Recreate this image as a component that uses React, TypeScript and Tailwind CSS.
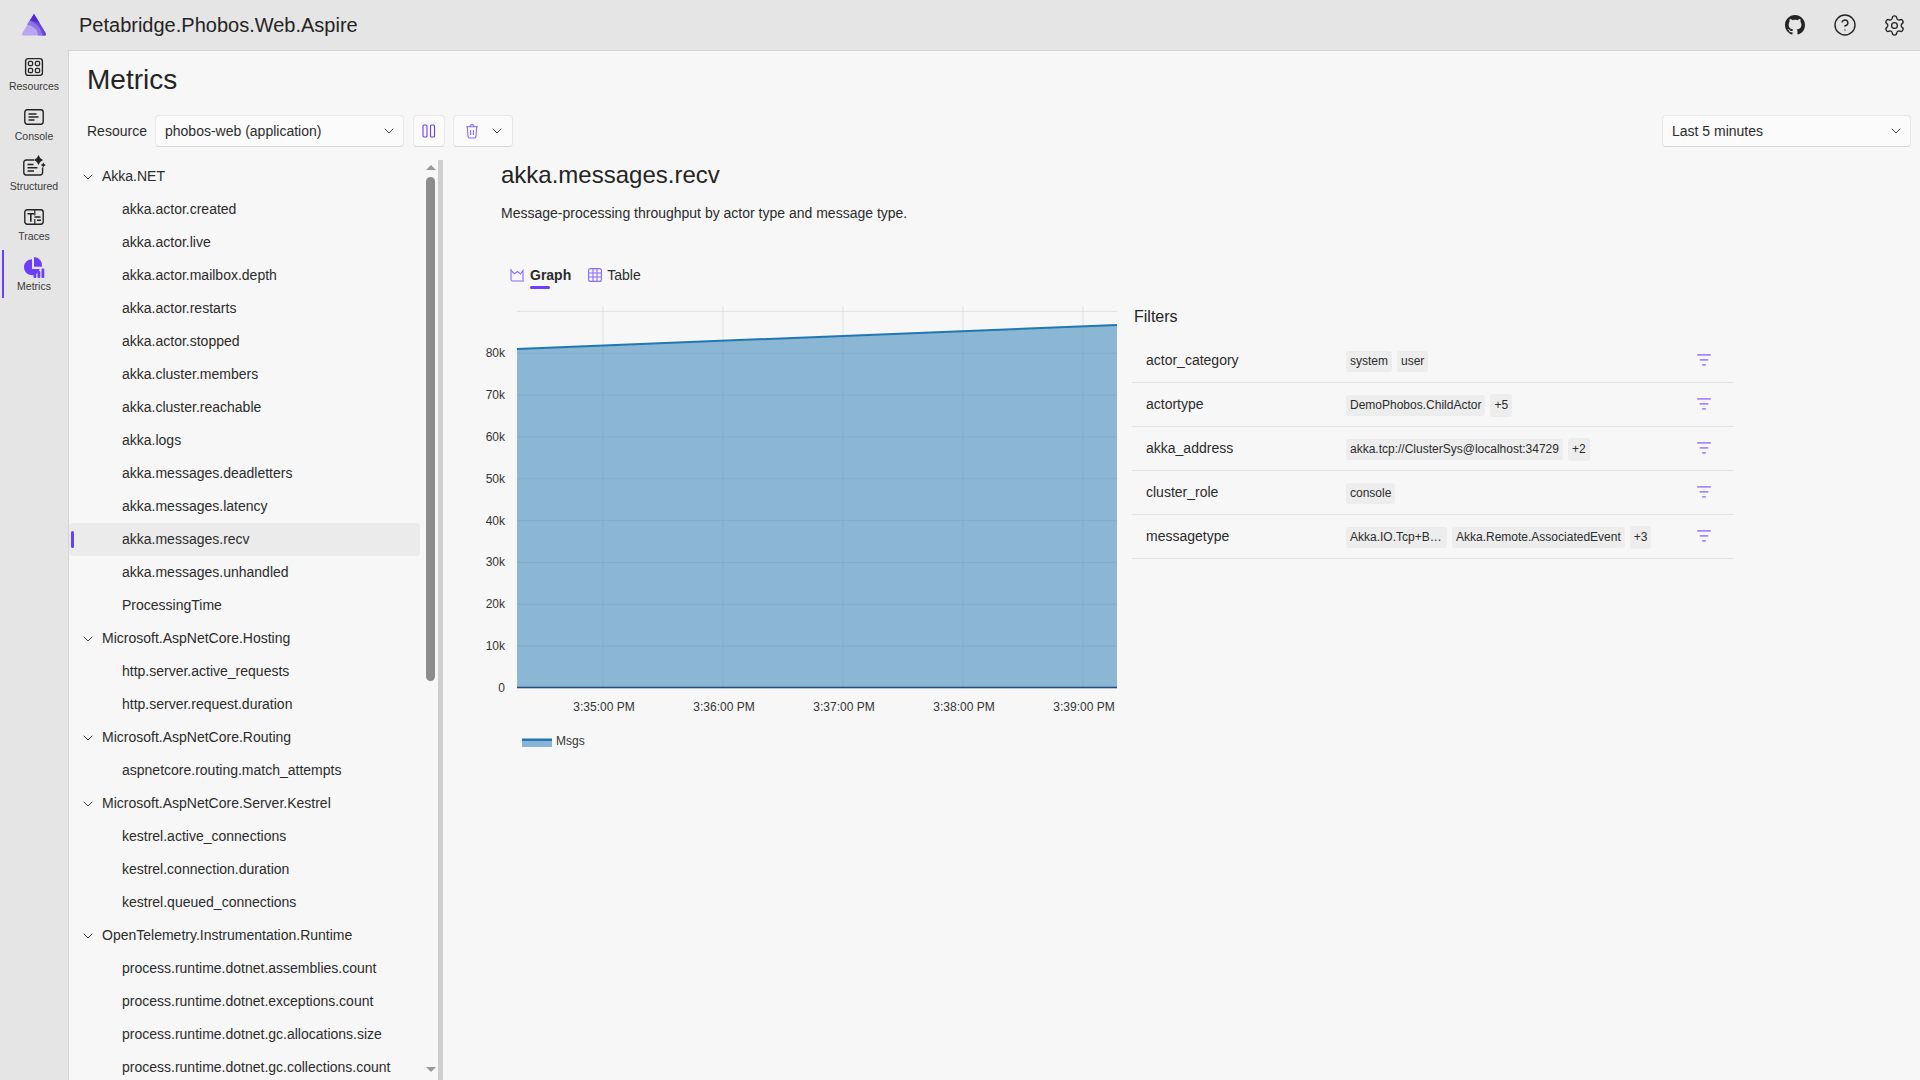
import { ChevronDown, CircleHelp, Settings } from 'lucide-react'
import { BsGithub } from 'react-icons/bs'

const tree = [
  {
    name: 'Akka.NET',
    items: [
      'akka.actor.created',
      'akka.actor.live',
      'akka.actor.mailbox.depth',
      'akka.actor.restarts',
      'akka.actor.stopped',
      'akka.cluster.members',
      'akka.cluster.reachable',
      'akka.logs',
      'akka.messages.deadletters',
      'akka.messages.latency',
      'akka.messages.recv',
      'akka.messages.unhandled',
      'ProcessingTime',
    ],
  },
  { name: 'Microsoft.AspNetCore.Hosting', items: ['http.server.active_requests', 'http.server.request.duration'] },
  { name: 'Microsoft.AspNetCore.Routing', items: ['aspnetcore.routing.match_attempts'] },
  {
    name: 'Microsoft.AspNetCore.Server.Kestrel',
    items: ['kestrel.active_connections', 'kestrel.connection.duration', 'kestrel.queued_connections'],
  },
  {
    name: 'OpenTelemetry.Instrumentation.Runtime',
    items: [
      'process.runtime.dotnet.assemblies.count',
      'process.runtime.dotnet.exceptions.count',
      'process.runtime.dotnet.gc.allocations.size',
      'process.runtime.dotnet.gc.collections.count',
    ],
  },
]

const filters = [
  { name: 'actor_category', chips: ['system', 'user'] },
  { name: 'actortype', chips: ['DemoPhobos.ChildActor'], more: '+5' },
  { name: 'akka_address', chips: ['akka.tcp://ClusterSys@localhost:34729'], more: '+2' },
  { name: 'cluster_role', chips: ['console'] },
  { name: 'messagetype', chips: ['Akka.IO.Tcp+B…', 'Akka.Remote.AssociatedEvent'], more: '+3' },
]

function Logo() {
  return (
    <svg width="26" height="24" viewBox="0 0 26 24">
      <path d="M13 1 L24.6 20 Q25.8 22.6 23 22.6 L3 22.6 Q.2 22.6 1.4 20 Z" fill="#b9a6f0" />
      <path d="M13 1 L24.6 20 Q25.8 22.6 23 22.6 L17 22.6 Q17 14 6 11.5 Z" fill="#8f74e6" />
      <path d="M13 1 L24.6 20 Q25.8 22.6 23 22.6 L21.5 22.6 Q20 12 9 7.5 Z" fill="#6a45d8" />
      <path d="M13 1 L18.5 10 Q14 7.8 9 7.5 Z" fill="#512bd4" />
    </svg>
  )
}

function ResourcesIcon() {
  return (
    <svg width="20" height="20" viewBox="0 0 20 20" fill="none" stroke="#242424" strokeWidth="1.3">
      <rect x="1.6" y="1.6" width="16.8" height="16.8" rx="2.6" strokeWidth="1.4" />
      <rect x="4.4" y="4.4" width="4.2" height="4.2" rx="1.4" />
      <rect x="11.4" y="4.4" width="4.2" height="4.2" rx="1.4" />
      <rect x="4.4" y="11.4" width="4.2" height="4.2" rx="1.4" />
      <rect x="11.4" y="11.4" width="4.2" height="4.2" rx="1.4" />
    </svg>
  )
}

function ConsoleIcon() {
  return (
    <svg width="20" height="16" viewBox="0 0 20 16" fill="none" stroke="#242424" strokeWidth="1.4">
      <rect x="0.8" y="0.8" width="18.4" height="14.4" rx="2.4" />
      <path d="M4.5 5h8M4.5 8h10M4.5 11h6" />
    </svg>
  )
}

function StructuredIcon() {
  return (
    <svg width="23" height="21" viewBox="0 0 23 21" fill="none" stroke="#242424" strokeWidth="1.4" className="-mt-[4px] ml-[1px]">
      <path d="M11 5H3.2A2.4 2.4 0 0 0 .8 7.4v10.2A2.4 2.4 0 0 0 3.2 20h14a2.4 2.4 0 0 0 2.4-2.4V12.5" />
      <path d="M4.5 9.5h6M4.5 12.8h10M4.5 16h6.5" />
      <path d="M15.5 0 Q16.6 3.6 20 5 Q16.6 6.4 15.5 10 Q14.4 6.4 11 5 Q14.4 3.6 15.5 0Z" fill="#242424" stroke="none" />
      <path d="M20.3 7.5 Q20.8 9.3 22.8 9.9 Q20.8 10.5 20.3 12.4 Q19.8 10.5 17.8 9.9 Q19.8 9.3 20.3 7.5Z" fill="#242424" stroke="none" />
    </svg>
  )
}

function TracesIcon() {
  return (
    <svg width="20" height="16" viewBox="0 0 20 16" fill="none" stroke="#242424" strokeWidth="1.4">
      <rect x="0.8" y="0.8" width="18.4" height="14.4" rx="2.4" />
      <path d="M3.5 4.8h6.5M6.8 4.8v8" strokeWidth="1.6" />
      <path d="M10.8 1v5.5M10.8 10v5" strokeWidth="1.2" />
      <path d="M10.5 8h6M13 11.2h4" strokeWidth="1.6" />
    </svg>
  )
}

function MetricsIcon() {
  return (
    <svg width="21" height="21" viewBox="0 0 21 21" fill="#6b3dff">
      <path d="M8 2.2A8 8 0 1 0 15.8 12H8Z" />
      <path d="M10 0A8.5 8.5 0 0 1 18 9.8H10Z" />
      <rect x="9.5" y="16.5" width="2.8" height="4.5" rx="1" />
      <rect x="13.5" y="14" width="2.8" height="7" rx="1" />
      <rect x="17.5" y="11.5" width="2.8" height="9.5" rx="1" />
    </svg>
  )
}

function PauseIcon() {
  return (
    <svg width="14" height="14" viewBox="0 0 14 14" fill="none" stroke="#6b3dff" strokeWidth="1.1">
      <rect x="1" y="1" width="4" height="12" rx="1" />
      <rect x="8.5" y="1" width="4" height="12" rx="1" />
    </svg>
  )
}

function TrashIcon() {
  return (
    <svg width="14" height="15" viewBox="0 0 14 15" fill="none" stroke="#8a6bff" strokeWidth="1.1">
      <path d="M1 2.8h12M5 2.6a2 2 0 0 1 4 0" />
      <path d="M2.3 3l.8 9.6a1.6 1.6 0 0 0 1.6 1.4h4.6a1.6 1.6 0 0 0 1.6-1.4l.8-9.6" />
      <path d="M5.6 6v5M8.4 6v5" />
    </svg>
  )
}

function GraphIcon() {
  return (
    <svg width="14" height="14" viewBox="0 0 14 14" fill="none" stroke="#8a6bff" strokeWidth="1.1">
      <path d="M1 1v10.5a1.5 1.5 0 0 0 1.5 1.5H14" />
      <path d="M1 2.5l3.5 3.2L7.5 3.5l3 2.5L13 2.5v10" />
    </svg>
  )
}

function TableIcon() {
  return (
    <svg width="14" height="14" viewBox="0 0 14 14" fill="none" stroke="#8a6bff" strokeWidth="1.1">
      <rect x="0.6" y="0.6" width="12.8" height="12.8" rx="2" />
      <path d="M5 .6v12.8M9 .6v12.8M.6 5h12.8M.6 9h12.8" />
    </svg>
  )
}

function FilterIcon() {
  return (
    <svg width="14" height="12" viewBox="0 0 14 12" fill="#a78bfa">
      <rect x="0" y="0" width="14" height="1.8" rx="0.7" />
      <rect x="2.5" y="5" width="9" height="1.8" rx="0.7" />
      <rect x="5" y="10" width="4" height="1.8" rx="0.7" />
    </svg>
  )
}

function NavItem({ icon, label, active }: { icon: React.ReactNode; label: string; active?: boolean }) {
  return (
    <div className="relative h-[48px] mb-[2px] flex flex-col items-center pt-[4px]">
      {active && <div className="absolute left-[2px] top-0 bottom-0 w-[2px] bg-[#6b3dff]" />}
      <div className="h-[26px] flex items-center justify-center">{icon}</div>
      <span className="text-[10.5px] leading-[13px] text-[#3a3a3a]">{label}</span>
    </div>
  )
}

function Chip({ text, tall }: { text: string; tall?: boolean }) {
  return (
    <span
      className={`bg-[#ededed] rounded-[3px] px-[4px] text-[12px] text-[#2b2b2b] whitespace-nowrap ${tall ? 'h-[23px] leading-[23px]' : 'h-[21px] leading-[21px]'} ${text === 'Akka.IO.Tcp+B…' ? 'w-[101px]' : ''}`}
    >
      {text}
    </span>
  )
}

function Chart() {
  const ys = [0, 1, 2, 3, 4, 5, 6, 7, 8, 9]
  const xs = [603, 723, 843, 963, 1083]
  const labels = ['3:35:00 PM', '3:36:00 PM', '3:37:00 PM', '3:38:00 PM', '3:39:00 PM']
  return (
    <svg width="660" height="460" viewBox="470 300 660 460" className="block" fontFamily="Liberation Sans, sans-serif">
      {ys.map((i) => {
        const y = 687 - i * 41.85
        return (
          <g key={i}>
            <line x1={517} x2={1117} y1={y} y2={y} stroke="#e1e1e1" />
            {i < 9 && (
              <text x={505} y={y + 4} textAnchor="end" fontSize="12" fill="#333">
                {i === 0 ? '0' : `${i}0k`}
              </text>
            )}
          </g>
        )
      })}
      {xs.map((x, i) => (
        <g key={x}>
          <line x1={x} x2={x} y1={305} y2={687} stroke="#e1e1e1" />
          <text x={x + 1} y={710} textAnchor="middle" fontSize="12" fill="#333">
            {labels[i]}
          </text>
        </g>
      ))}
      <path d="M517 348 L1117 324 L1117 686.5 L517 686.5 Z" fill="#1f77b4" fillOpacity="0.5" />
      <path d="M517 348 L1117 324" fill="none" stroke="#1f77b4" strokeWidth="2" />
      <line x1={517} x2={1117} y1={686.5} y2={686.5} stroke="#1f4e79" strokeWidth="1.5" />
      <rect x={522} y={737} width={30} height={9} fill="#8ab4d6" />
      <line x1={522} x2={552} y1={739} y2={739} stroke="#1f77b4" strokeWidth="2" />
      <text x={556} y={744} fontSize="12" fill="#333">
        Msgs
      </text>
    </svg>
  )
}

export default function App() {
  return (
    <div className="w-[1920px] h-[1080px] overflow-hidden flex flex-col bg-[#e5e5e5] text-[#2b2b2b] font-['Liberation_Sans',Arial,sans-serif]">
      <header className="h-[50px] shrink-0 flex items-center">
        <div className="w-[68px] flex justify-center">
          <Logo />
        </div>
        <div className="ml-[11px] text-[20px] text-[#242424]">Petabridge.Phobos.Web.Aspire</div>
        <div className="ml-auto flex items-center">
          <div className="w-[50px] flex justify-center">
            <BsGithub size={20} className="text-[#242424]" />
          </div>
          <div className="w-[50px] flex justify-center">
            <CircleHelp size={24} strokeWidth={1.4} className="text-[#242424]" />
          </div>
          <div className="w-[50px] flex justify-center">
            <Settings size={23} strokeWidth={1.4} className="text-[#242424] mr-[1px]" />
          </div>
        </div>
      </header>
      <div className="flex-1 min-h-0 flex">
        <nav className="w-[68px] shrink-0 flex flex-col">
          <NavItem icon={<ResourcesIcon />} label="Resources" />
          <NavItem icon={<ConsoleIcon />} label="Console" />
          <NavItem icon={<StructuredIcon />} label="Structured" />
          <NavItem icon={<TracesIcon />} label="Traces" />
          <NavItem icon={<MetricsIcon />} label="Metrics" active />
        </nav>
        <main className="flex-1 min-w-0 bg-[#f7f7f7] border-l border-t border-[#d4d4d4] flex flex-col">
          <h1 className="ml-[18px] mt-[8px] h-[42px] leading-[42px] text-[28px] text-[#242424]">Metrics</h1>
          <div className="mt-[14px] h-[32px] flex items-center pl-[18px] pr-[9px] shrink-0">
            <span className="text-[14px] w-[68px]">Resource</span>
            <div className="w-[249px] h-[32px] bg-[#fbfbfb] border border-[#e8e8e8] border-b-[#d6d6d6] rounded-[4px] flex items-center justify-between pl-[9px] pr-[6px] text-[14px]">
              phobos-web (application)
              <ChevronDown size={16} strokeWidth={1.5} className="text-[#444]" />
            </div>
            <div className="ml-[9px] w-[32px] h-[32px] bg-[#fbfbfb] border border-[#e8e8e8] border-b-[#d6d6d6] rounded-[4px] flex items-center justify-center">
              <PauseIcon />
            </div>
            <div className="ml-[8px] w-[60px] h-[32px] bg-[#fbfbfb] border border-[#e8e8e8] border-b-[#d6d6d6] rounded-[4px] flex items-center justify-between pl-[11px] pr-[7px]">
              <TrashIcon />
              <ChevronDown size={16} strokeWidth={1.5} className="text-[#444]" />
            </div>
            <div className="ml-auto w-[249px] h-[32px] bg-[#fbfbfb] border border-[#e8e8e8] border-b-[#d6d6d6] rounded-[4px] flex items-center justify-between pl-[9px] pr-[6px] text-[14px]">
              Last 5 minutes
              <ChevronDown size={16} strokeWidth={1.5} className="text-[#444]" />
            </div>
          </div>
          <div className="flex-1 min-h-0 flex mt-[13px]">
            <div className="w-[369px] shrink-0 flex overflow-hidden">
              <div className="w-[351px] shrink-0 text-[14px] text-[#2b2b2b]">
                {tree.map((g) => (
                  <div key={g.name}>
                    <div className="h-[33px] flex items-center pl-[11px] gap-[6px] whitespace-nowrap">
                      <ChevronDown size={16} strokeWidth={1.5} className="text-[#444] shrink-0" />
                      <span>{g.name}</span>
                    </div>
                    {g.items.map((item) => {
                      const sel = item === 'akka.messages.recv'
                      return (
                        <div
                          key={item}
                          className={`relative h-[33px] flex items-center pl-[53px] whitespace-nowrap rounded-[4px] ${sel ? 'bg-[#ebebeb]' : ''}`}
                        >
                          {sel && <div className="absolute left-[2px] top-[8px] bottom-[8px] w-[3px] rounded-[2px] bg-[#6b3dff]" />}
                          {item}
                        </div>
                      )
                    })}
                  </div>
                ))}
              </div>
              <div className="ml-[6px] w-[9px] flex flex-col items-center">
                <div className="mt-[5px] w-0 h-0 border-x-[5px] border-x-transparent border-b-[5px] border-b-[#9a9a9a]" />
                <div className="mt-[7px] w-[9px] h-[504px] rounded-[5px] bg-[#8c8c8c] shrink-0" />
                <div className="mt-[386px] w-0 h-0 border-x-[5px] border-x-transparent border-t-[5px] border-t-[#9a9a9a]" />
              </div>
            </div>
            <div className="w-[5px] bg-[#cfcfcf] shrink-0" />
            <section className="flex-1 min-w-0 pl-[58px]">
              <h2 className="-mt-[1px] h-[32px] leading-[32px] text-[24px] text-[#242424]">akka.messages.recv</h2>
              <p className="mt-[12px] h-[20px] leading-[20px] text-[14px]">Message-processing throughput by actor type and message type.</p>
              <div className="mt-[40px] h-[24px] flex items-center pl-[9px] text-[14px]">
                <GraphIcon />
                <span className="relative ml-[6px] font-bold">
                  Graph
                  <span className="absolute left-0 top-[21px] w-[20px] h-[3px] rounded-[2px] bg-[#6b3dff]" />
                </span>
                <span className="ml-[17px]">
                  <TableIcon />
                </span>
                <span className="ml-[5px]">Table</span>
              </div>
              <div className="flex -ml-[31px] mt-[14px]">
                <Chart />
                <div className="ml-[2px] w-[602px] pt-[6px]">
                  <div className="h-[20px] leading-[20px] text-[16px] ml-[2px] text-[#242424]">Filters</div>
                  <div className="mt-[12px]">
                    {filters.map((f) => (
                      <div key={f.name} className="h-[44px] border-b border-[#e3e3e3] flex items-center text-[14px]">
                        <span className="w-[214px] pl-[14px] shrink-0">{f.name}</span>
                        <div className="mt-[1px] flex items-center gap-[5px]">
                          {f.chips.map((c) => (
                            <Chip key={c} text={c} />
                          ))}
                          {f.more && <Chip text={f.more} tall />}
                        </div>
                        <span className="ml-auto pr-[23px] -mt-[1px] flex">
                          <FilterIcon />
                        </span>
                      </div>
                    ))}
                  </div>
                </div>
              </div>
            </section>
          </div>
        </main>
      </div>
    </div>
  )
}
